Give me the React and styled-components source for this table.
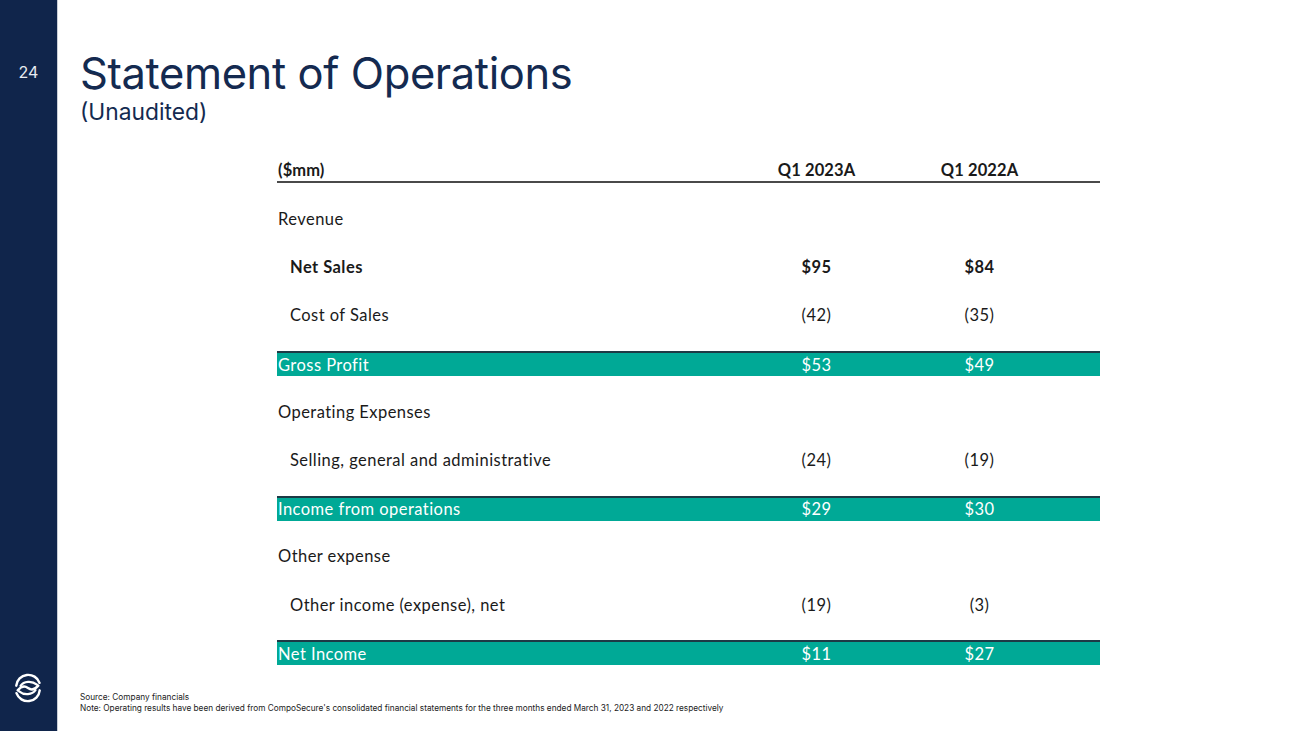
import React from "react";
import styled, { createGlobalStyle } from "styled-components";

const GlobalStyle = createGlobalStyle`
  html, body {
    margin: 0;
    padding: 0;
    background: #ffffff;
  }
  * {
    box-sizing: border-box;
  }
`;

const Page = styled.div`
  display: flex;
  width: 1300px;
  height: 731px;
  background: #ffffff;
  overflow: hidden;
`;

const Sidebar = styled.aside`
  width: 58px;
  flex-shrink: 0;
  background: #10254b;
  border-right: 1px solid #c9ced6;
  display: flex;
  flex-direction: column;
  align-items: center;
`;

const PageNum = styled.div`
  margin-top: 62px;
  font-family: Inter, "Liberation Sans", sans-serif;
  font-size: 16px;
  color: #e8ecf2;
`;

const Logo = styled.div`
  margin-top: auto;
  margin-bottom: 28px;
  margin-right: 1px;
  width: 30px;
  height: 30px;
`;

const Main = styled.main`
  flex: 1;
  display: flex;
  flex-direction: column;
  padding-left: 22px;
`;

const Title = styled.h1`
  margin: 49px 0 0 0;
  font-family: Inter, "Liberation Sans", sans-serif;
  font-weight: 400;
  font-size: 43.5px;
  line-height: 48px;
  letter-spacing: -0.4px;
  color: #142a50;
`;

const Subtitle = styled.div`
  margin-top: 2px;
  font-family: Inter, "Liberation Sans", sans-serif;
  font-size: 22.8px;
  line-height: 26px;
  color: #142a50;
`;

const Table = styled.div`
  margin-top: 34px;
  margin-left: 197px;
  width: 823px;
  font-family: Lato, "Open Sans", sans-serif;
  font-size: 16.5px;
  letter-spacing: 0.45px;
  color: #1a1a1a;
`;

const Grid = styled.div`
  display: grid;
  grid-template-columns: 1fr 163px 163px 39px;
  align-items: center;
`;

const HeaderRow = styled(Grid)`
  height: 24px;
  border-bottom: 2px solid #4a4a4a;
  font-weight: 700;
  letter-spacing: 0.1px;
  margin-bottom: 12px;
`;

const Row = styled.div`
  height: 48.2px;
  display: flex;
  align-items: center;
`;

const Band = styled(Grid)`
  width: 100%;
  height: 25px;
  background: ${(p) => (p.$hl ? "#00a996" : "transparent")};
  border-top: ${(p) => (p.$hl ? "2px solid #1d3a45" : "none")};
  color: ${(p) => (p.$hl ? "#ffffff" : "#1a1a1a")};
  font-weight: ${(p) => (p.$bold ? 700 : 400)};
`;

const Label = styled.div`
  padding-left: ${(p) => (p.$indent ? "13px" : "1px")};
`;

const Cell = styled.div`
  text-align: center;
`;

const Footer = styled.footer`
  margin-top: auto;
  margin-bottom: 17px;
  font-family: Inter, "Liberation Sans", sans-serif;
  font-size: 8.25px;
  line-height: 11px;
  color: #222;
`;

const rows = [
  { label: "Revenue" },
  { label: "Net Sales", a: "$95", b: "$84", indent: true, bold: true },
  { label: "Cost of Sales", a: "(42)", b: "(35)", indent: true },
  { label: "Gross Profit", a: "$53", b: "$49", hl: true },
  { label: "Operating Expenses" },
  { label: "Selling, general and administrative", a: "(24)", b: "(19)", indent: true },
  { label: "Income from operations", a: "$29", b: "$30", hl: true },
  { label: "Other expense" },
  { label: "Other income (expense), net", a: "(19)", b: "(3)", indent: true },
  { label: "Net Income", a: "$11", b: "$27", hl: true },
];

const LogoMark = () => (
  <svg viewBox="0 0 32 32" width="30" height="30" fill="none" stroke="#ffffff" strokeLinecap="round">
    <path d="M3.5 13.5 A12.8 12.8 0 0 1 28.3 10.5" strokeWidth="2.6" />
    <path d="M8 13.8 C11.5 8.8 20 8 25.5 12.5" strokeWidth="2.4" />
    <path d="M5 18.5 C9 13.8 13 13.8 16 16 S23 18.2 27 13.5" strokeWidth="2.6" />
    <path d="M24 18.2 C20.5 23.2 12 24 6.5 19.5" strokeWidth="2.4" />
    <path d="M28.5 18.5 A12.8 12.8 0 0 1 3.7 21.5" strokeWidth="2.6" />
  </svg>
);

const App = () => {
  return (
    <>
      <GlobalStyle />
      <Page>
        <Sidebar>
          <PageNum>24</PageNum>
          <Logo>
            <LogoMark />
          </Logo>
        </Sidebar>
        <Main>
          <Title>Statement of Operations</Title>
          <Subtitle>(Unaudited)</Subtitle>

          <Table>
            <HeaderRow>
              <Label>($mm)</Label>
              <Cell>Q1 2023A</Cell>
              <Cell>Q1 2022A</Cell>
              <div />
            </HeaderRow>
            {rows.map((r) => (
              <Row key={r.label}>
                <Band $hl={r.hl} $bold={r.bold}>
                  <Label $indent={r.indent}>{r.label}</Label>
                  <Cell>{r.a}</Cell>
                  <Cell>{r.b}</Cell>
                  <div />
                </Band>
              </Row>
            ))}
          </Table>

          <Footer>
            Source: Company financials
            <br />
            Note: Operating results have been derived from CompoSecure's consolidated financial statements for the three months ended March 31, 2023 and 2022 respectively
          </Footer>
        </Main>
      </Page>
    </>
  );
};

export default App;
